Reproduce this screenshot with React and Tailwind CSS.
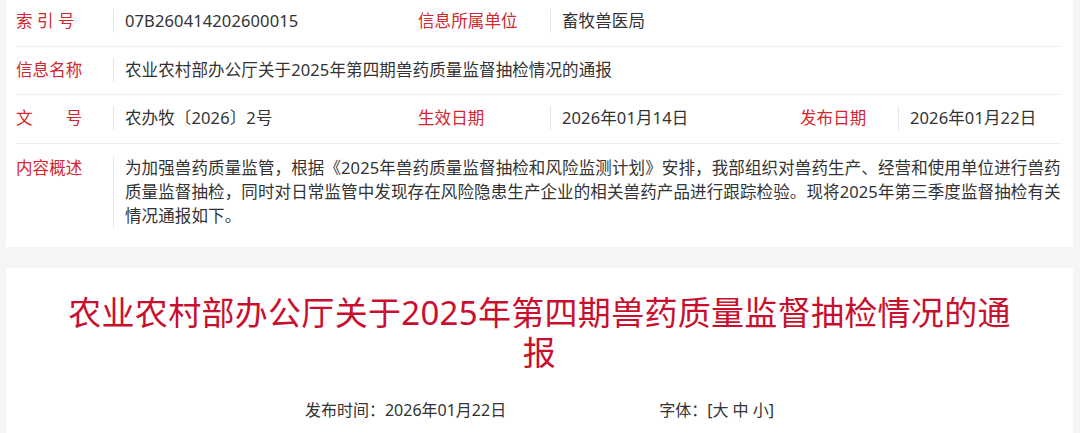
import React from 'react'

const red = 'text-[#d4262e]'

function Label({ children, className = '' }) {
  return <div className={`${red} shrink-0 ${className}`}>{children}</div>
}

function Value({ children, className = '' }) {
  return (
    <div className={`shrink-0 border-l border-[#e6e6e6] pl-[11px] text-[#333] ${className}`}>
      {children}
    </div>
  )
}

export default function App() {
  return (
    <div className="min-h-screen bg-[#f5f5f5] pl-[6px] pr-[7px] font-['Noto_Sans','Noto_Sans_CJK_SC',sans-serif]">
      {/* 信息表 */}
      <div className="bg-white pl-[10px] pr-[11px] text-[16.5px] leading-[24px] tracking-[0.12px]">
        <div className="flex border-b border-[#eeeeee] pt-[9px] pb-[13px]">
          <Label className="w-[97px]">索 引 号</Label>
          <Value className="w-[305px]">07B260414202600015</Value>
          <Label className="w-[132px]">信息所属单位</Label>
          <Value>畜牧兽医局</Value>
        </div>
        <div className="flex border-b border-[#eeeeee] pt-[11px] pb-[12px]">
          <Label className="w-[97px]">信息名称</Label>
          <Value>农业农村部办公厅关于2025年第四期兽药质量监督抽检情况的通报</Value>
        </div>
        <div className="flex border-b border-[#eeeeee] pt-[11px] pb-[13px]">
          <Label className="w-[97px]">文　　号</Label>
          <Value className="w-[305px]">农办牧〔2026〕2号</Value>
          <Label className="w-[132px]">生效日期</Label>
          <Value className="w-[250px]">2026年01月14日</Value>
          <Label className="w-[98px]">发布日期</Label>
          <Value>2026年01月22日</Value>
        </div>
        <div className="flex items-start pt-[12px] pb-[19px]">
          <Label className="w-[97px]">内容概述</Label>
          <div className="flex-1 border-l border-[#e6e6e6] pl-[11px] text-[#333]">
            为加强兽药质量监管，根据《2025年兽药质量监督抽检和风险监测计划》安排，我部组织对兽药生产、经营和使用单位进行兽药质量监督抽检，同时对日常监管中发现存在风险隐患生产企业的相关兽药产品进行跟踪检验。现将2025年第三季度监督抽检有关情况通报如下。
          </div>
        </div>
      </div>

      {/* 正文标题 */}
      <div className="mt-[21px] bg-white px-[50px] pt-[25px] pb-4">
        <h1 className="text-center text-[33px] leading-[40px] tracking-[0.3px] text-[#c8102e]">
          农业农村部办公厅关于2025年第四期兽药质量监督抽检情况的通报
        </h1>
        <div className="mt-[25px] flex justify-center gap-[153px] text-[16px] leading-[24px] text-[#333]">
          <span>发布时间：2026年01月22日</span>
          <span>字体：[大 中 小]</span>
        </div>
      </div>
    </div>
  )
}
